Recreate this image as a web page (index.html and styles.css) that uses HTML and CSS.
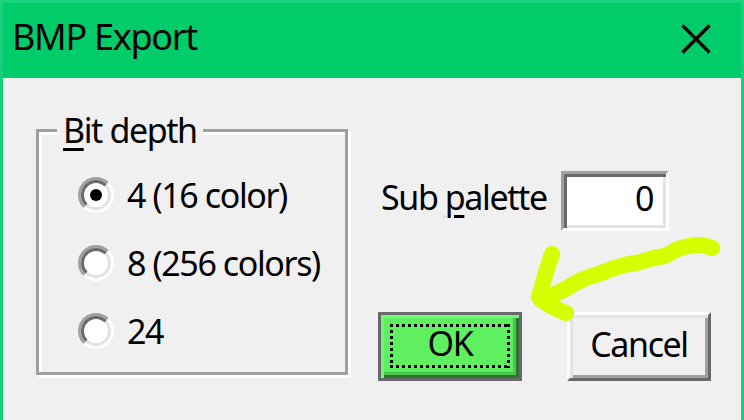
FILE: index.html
```html
<!DOCTYPE html>
<html>
<head>
<meta charset="utf-8">
<link rel="stylesheet" href="styles.css">
</head>
<body>
<div class="window">
  <div class="titlebar">
    <span class="title">BMP Export</span>
    <svg class="close" width="30" height="30" viewBox="0 0 30 30">
      <path d="M1.5 1.5 L28.5 28.5 M28.5 1.5 L1.5 28.5" stroke="#000" stroke-width="3.2" fill="none"/>
    </svg>
  </div>
  <div class="content">
    <fieldset class="group">
      <legend class="legend"><u>B</u>it depth</legend>
      <div class="radio-row">
        <span class="radio checked"></span>
        <span class="label">4 (16 color)</span>
      </div>
      <div class="radio-row">
        <span class="radio"></span>
        <span class="label">8 (256 colors)</span>
      </div>
      <div class="radio-row">
        <span class="radio"></span>
        <span class="label">24</span>
      </div>
    </fieldset>
    <div class="side">
      <div class="field-row">
        <span class="field-label">Sub <u>p</u>alette</span>
        <div class="textbox">0</div>
      </div>
      <div class="buttons">
        <div class="btn ok"><span class="focus">OK</span></div>
        <div class="btn cancel">Cancel</div>
      </div>
    </div>
  </div>
  <svg class="arrow" width="744" height="420" viewBox="0 0 744 420">
    <path d="M712 248 C 700 243 690 245 678 249 C 670 252 668 256 660 257 C 648 258 645 262 635 263 C 625 264 622 266 614 268 C 605 271 600 274 592 276 C 580 279 575 284 565 289 C 555 294 547 298 541 300" stroke="#d4ff00" stroke-width="16" stroke-linecap="round" stroke-linejoin="round" fill="none"/>
    <path d="M552 254 C 548 265 545 275 542 286 L 539 297 C 546 305 555 309 566 313" stroke="#d4ff00" stroke-width="16" stroke-linecap="round" stroke-linejoin="round" fill="none"/>
  </svg>
</div>
</body>
</html>
```

FILE: styles.css
```css
* { box-sizing: border-box; }
html, body {
  margin: 0;
  padding: 0;
  background: #f0f0f0;
}
body {
  font-family: "Noto Sans", "Open Sans", sans-serif;
  font-size: 34px;
  letter-spacing: -1.4px;
  color: #000;
}
u { text-decoration-thickness: 3px; text-underline-offset: 5px; }
.window {
  position: relative;
  width: 744px;
  height: 420px;
  background: #f0f0f0;
  border-left: 3px solid #17d079;
  border-right: 3px solid #17d079;
  border-top: 3px solid #19d47c;
  overflow: hidden;
}
.titlebar {
  height: 75px;
  background: #00cc6a;
  display: flex;
  align-items: flex-start;
  justify-content: space-between;
  padding: 0 30px 0 9px;
}
.title {
  font-size: 36px;
  letter-spacing: -1.3px;
  line-height: 36px;
  margin-top: 16px;
}
.close { display: block; margin-top: 21px; }
.content {
  display: flex;
  padding: 34px 0 0 33px;
  gap: 30px;
}
.group {
  margin: 0;
  width: 312px;
  height: 263px;
  border: 3px solid #a0a0a0;
  box-shadow: 3px 3px 0 #fff, inset 3px 3px 0 #fff;
  padding: 29px 0 0 39px;
  display: flex;
  flex-direction: column;
  gap: 32px;
}
.legend {
  background: #f0f0f0;
  padding: 0 6px;
  margin-left: -21px;
  line-height: 36px;
  white-space: nowrap;
}
.radio-row {
  display: flex;
  align-items: center;
  gap: 13px;
  height: 36px;
  line-height: 36px;
  white-space: nowrap;
}
.radio {
  position: relative;
  width: 36px;
  height: 36px;
  border-radius: 50%;
  border: 3px solid;
  border-color: #a0a0a0 #fff #fff #a0a0a0;
  flex: none;
}
.radio::before {
  content: "";
  position: absolute;
  inset: 0;
  border-radius: 50%;
  border: 3px solid;
  border-color: #696969 #e3e3e3 #e3e3e3 #696969;
  background: #fff;
}
.radio.checked::after {
  content: "";
  position: absolute;
  left: 9px;
  top: 9px;
  width: 12px;
  height: 12px;
  border-radius: 50%;
  background: #000;
}
.side {
  display: flex;
  flex-direction: column;
  padding-top: 59px;
}
.field-row {
  display: flex;
  align-items: flex-start;
  padding-left: 3px;
}
.field-label {
  width: 180px;
  flex: none;
  white-space: nowrap;
  line-height: 36px;
  margin-top: 8px;
}
.textbox {
  width: 108px;
  height: 60px;
  background: #fff;
  border: 3px solid;
  border-color: #a0a0a0 #fff #fff #a0a0a0;
  box-shadow: inset 3px 3px 0 #696969, inset -3px -3px 0 #e3e3e3;
  text-align: right;
  padding-right: 13px;
  line-height: 48px;
}
.buttons {
  display: flex;
  gap: 45px;
  margin-top: 81px;
}
.btn {
  width: 144px;
  height: 69px;
  display: flex;
  align-items: center;
  justify-content: center;
  line-height: 34px;
}
.ok {
  background: #5ef05e;
  border: 3px solid #696969;
  box-shadow: inset 3px 3px 0 #76f576, inset -3px -3px 0 #2f7238, inset -6px -6px 0 #4cc74c;
  padding: 9px 9px 10px 9px;
}
.focus {
  width: 100%;
  height: 100%;
  display: flex;
  align-items: center;
  justify-content: center;
  padding-bottom: 6px;
  background:
    linear-gradient(90deg, #000 50%, transparent 50%) left top / 6px 3px repeat-x,
    linear-gradient(90deg, #000 50%, transparent 50%) left bottom / 6px 3px repeat-x,
    linear-gradient(180deg, #000 50%, transparent 50%) left top / 3px 6px repeat-y,
    linear-gradient(180deg, #000 50%, transparent 50%) right top / 3px 6px repeat-y;
}
.cancel {
  background: #f0f0f0;
  border: 3px solid;
  border-color: #fff #696969 #696969 #fff;
  box-shadow: inset 3px 3px 0 #e3e3e3, inset -3px -3px 0 #a0a0a0;
  padding-bottom: 6px;
}
.arrow {
  position: absolute;
  left: -3px;
  top: -3px;
  pointer-events: none;
}
```
